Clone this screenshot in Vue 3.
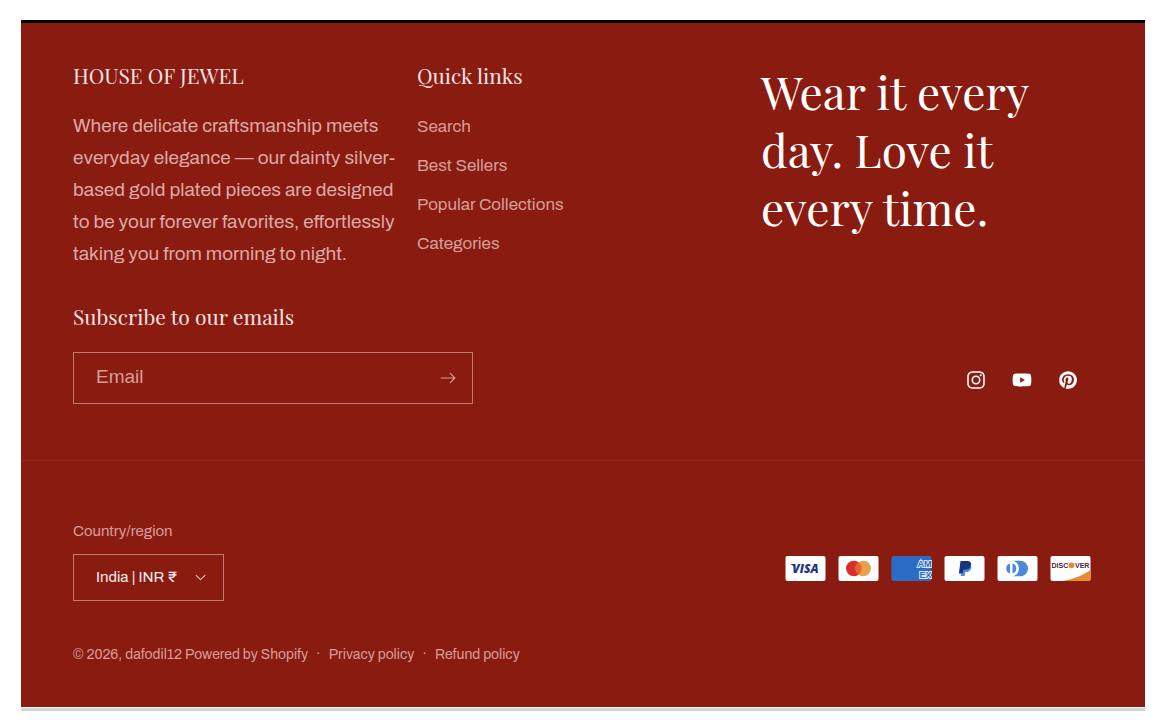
<script setup>
import { ref } from 'vue'

const email = ref('')
const region = ref('in')
const links = ['Search', 'Best Sellers', 'Popular Collections', 'Categories']
const socials = [
  {
    name: 'Instagram',
    path: 'M13.23 3.49c-.84-.03-1.09-.04-3.23-.04-2.14 0-2.39.01-3.24.05-.78.03-1.2.16-1.48.27-.38.15-.64.32-.92.6-.28.28-.45.54-.6.92-.11.28-.24.7-.27 1.47-.04.85-.05 1.1-.05 3.24s.01 2.39.05 3.24c.03.78.16 1.2.27 1.48.15.37.32.64.6.92.28.28.55.45.92.6.28.11.7.24 1.48.27.84.04 1.1.05 3.24.05s2.39-.01 3.23-.05c.78-.03 1.2-.16 1.48-.27.38-.15.64-.32.92-.6.28-.28.45-.55.6-.92.11-.28.24-.7.27-1.48.04-.85.05-1.1.05-3.24s-.01-2.39-.05-3.24c-.03-.77-.16-1.19-.27-1.47a2.5 2.5 0 0 0-.6-.92 2.5 2.5 0 0 0-.92-.6c-.28-.11-.7-.24-1.48-.28ZM6.69 2.05C7.55 2.01 7.82 2 10 2c2.17 0 2.44.01 3.3.05.85.04 1.43.17 1.94.37.53.2.97.48 1.42.92.44.45.72.89.92 1.42.2.5.33 1.09.37 1.94.04.85.05 1.13.05 3.3s-.01 2.45-.05 3.3c-.04.86-.17 1.44-.37 1.95-.2.52-.48.97-.92 1.41-.45.45-.89.72-1.42.92-.51.2-1.09.34-1.94.37-.86.04-1.13.05-3.3.05-2.18 0-2.45-.01-3.31-.05-.85-.03-1.43-.17-1.94-.37a3.9 3.9 0 0 1-1.41-.92 3.9 3.9 0 0 1-.92-1.41c-.2-.51-.34-1.09-.37-1.95C2.01 12.45 2 12.17 2 10s.01-2.45.05-3.3c.03-.85.17-1.43.37-1.94.2-.53.47-.97.92-1.42.44-.44.89-.72 1.41-.92.51-.2 1.09-.33 1.94-.37ZM10 5.89a4.11 4.11 0 1 1 0 8.22 4.11 4.11 0 0 1 0-8.22Zm0 1.44a2.67 2.67 0 1 0 0 5.34 2.67 2.67 0 0 0 0-5.34Zm4.27-2.56a.96.96 0 1 1 0 1.92.96.96 0 0 1 0-1.92Z'
  },
  {
    name: 'YouTube',
    path: 'M18.16 5.87c.34 1.309.34 4.08.34 4.08s0 2.771-.34 4.08a2.125 2.125 0 0 1-1.53 1.53c-1.309.34-6.63.34-6.63.34s-5.321 0-6.63-.34a2.125 2.125 0 0 1-1.53-1.53c-.34-1.309-.34-4.08-.34-4.08s0-2.771.34-4.08a2.173 2.173 0 0 1 1.53-1.53C4.679 4 10 4 10 4s5.321 0 6.63.34a2.173 2.173 0 0 1 1.53 1.53ZM8.3 12.5l4.42-2.55L8.3 7.4v5.1Z'
  },
  {
    name: 'Pinterest',
    path: 'M10 2.01c2.124.01 4.16.855 5.666 2.353a8.087 8.087 0 0 1 1.277 9.68A7.952 7.952 0 0 1 10 18.04a8.164 8.164 0 0 1-2.276-.307c.403-.653.672-1.24.816-1.729l.567-2.2c.134.27.393.5.768.702.384.192.768.297 1.19.297.836 0 1.585-.24 2.248-.72a4.678 4.678 0 0 0 1.537-1.969c.37-.89.554-1.848.537-2.813 0-1.249-.48-2.315-1.43-3.227a5.061 5.061 0 0 0-3.65-1.374c-.893 0-1.729.154-2.478.461a5.023 5.023 0 0 0-3.236 4.552c0 .72.134 1.355.413 1.902.269.538.672.922 1.22 1.152.096.039.182.039.25 0 .066-.028.114-.096.143-.192l.173-.653c.048-.144.02-.288-.105-.432a2.257 2.257 0 0 1-.548-1.565 3.803 3.803 0 0 1 3.976-3.861c1.047 0 1.863.288 2.44.855.585.576.883 1.315.883 2.228 0 .768-.106 1.479-.317 2.122a3.813 3.813 0 0 1-.893 1.556c-.384.384-.836.576-1.345.576-.413 0-.749-.144-1.018-.451-.259-.307-.345-.672-.25-1.085.147-.514.298-1.026.452-1.537l.173-.701c.057-.25.086-.451.086-.624 0-.346-.096-.634-.269-.855-.192-.22-.451-.336-.797-.336-.432 0-.797.192-1.085.595-.288.394-.442.893-.442 1.499.005.374.063.746.173 1.104l.058.144c-.576 2.478-.913 3.938-1.037 4.36-.116.528-.154 1.153-.125 1.863A8.067 8.067 0 0 1 2 10.03c0-2.208.778-4.11 2.343-5.666A7.721 7.721 0 0 1 10 2.001v.01Z'
  }
]
</script>

<template>
  <div class="page">
    <footer class="footer">
      <div class="upper">
        <div class="columns">
          <section>
            <h2 class="heading">HOUSE OF JEWEL</h2>
            <p class="about">Where delicate craftsmanship meets everyday elegance — our dainty silver-based gold plated pieces are designed to be your forever favorites, effortlessly taking you from morning to night.</p>
          </section>
          <nav aria-labelledby="quick-links">
            <h2 id="quick-links" class="heading">Quick links</h2>
            <ul class="links">
              <li v-for="link in links" :key="link"><a href="#">{{ link }}</a></li>
            </ul>
          </nav>
          <p class="slogan">Wear it every day. Love it every time.</p>
        </div>

        <div class="signup-row">
          <form class="signup" @submit.prevent>
            <h2 class="heading">Subscribe to our emails</h2>
            <div class="field">
              <input v-model="email" type="email" placeholder="Email" aria-label="Email" />
              <button type="submit" aria-label="Subscribe">
                <svg width="16" height="12" viewBox="0 0 14 10" aria-hidden="true"><path fill="currentColor" d="M8.537.808a.5.5 0 01.817-.162l4 4a.5.5 0 010 .708l-4 4a.5.5 0 11-.708-.708L11.793 5.5H1a.5.5 0 010-1h10.793L8.646 1.354a.5.5 0 01-.109-.546z" /></svg>
              </button>
            </div>
          </form>
          <div class="socials">
            <a v-for="s in socials" :key="s.name" href="#" :aria-label="s.name">
              <svg width="22" height="22" viewBox="0 0 20 20" aria-hidden="true"><path fill="currentColor" fill-rule="evenodd" :d="s.path" /></svg>
            </a>
          </div>
        </div>
      </div>

      <div class="lower">
        <div class="region-row">
          <div class="region">
            <label for="region">Country/region</label>
            <div class="picker">
              <select id="region" v-model="region">
                <option value="in">India | INR ₹</option>
              </select>
              <svg class="caret" width="11" height="7" viewBox="0 0 10 6" aria-hidden="true"><path fill="currentColor" d="M9.354.646a.5.5 0 00-.708 0L5 4.293 1.354.646a.5.5 0 00-.708.708l4 4a.5.5 0 00.708 0l4-4a.5.5 0 000-.708z" /></svg>
            </div>
          </div>
          <ul class="payments" aria-label="Payment methods">
            <li>
              <svg viewBox="0 0 40 25" role="img" aria-label="Visa">
                <rect width="40" height="25" rx="2" fill="#fff" />
                <path d="M5 8h4l1 3.500z" fill="#27337f" />
                <text x="20" y="17" text-anchor="middle" class="visa">VISA</text>
              </svg>
            </li>
            <li>
              <svg viewBox="0 0 40 25" role="img" aria-label="Mastercard">
                <rect width="40" height="25" rx="2" fill="#fff" />
                <circle cx="15.300" cy="12.500" r="7.800" fill="#db2d2c" />
                <circle cx="24.700" cy="12.500" r="7.800" fill="#e8a04c" />
                <path d="M20 6.270a7.800 7.800 0 0 1 0 12.460a7.800 7.800 0 0 1 0-12.460z" fill="#e5622b" />
              </svg>
            </li>
            <li>
              <svg viewBox="0 0 40 25" role="img" aria-label="American Express">
                <rect width="40" height="25" rx="2" fill="#2d6cc6" />
                <text x="40" y="11" text-anchor="end" class="amex">AM</text>
                <text x="40" y="21.500" text-anchor="end" class="amex">EX</text>
              </svg>
            </li>
            <li>
              <svg viewBox="0 0 40 25" role="img" aria-label="PayPal">
                <rect width="40" height="25" rx="2" fill="#fff" />
                <path d="M18 9h8c1.800 2.800.5 6.500-3.500 7h-1.700l-.6 4h-4z" fill="#4a90d6" />
                <path d="M16 5h6.500c3.200 0 4.700 1.800 4 4.600-.7 2.900-2.800 4.100-5.800 4.100h-1.800l-.9 3.800h-3.600z" fill="#1d3282" />
              </svg>
            </li>
            <li>
              <svg viewBox="0 0 40 25" role="img" aria-label="Diners Club">
                <rect width="40" height="25" rx="2" fill="#fff" />
                <path d="M15 4.700h7.500c4.500 0 8 3.500 8 7.800s-3.500 7.800-8 7.800h-7.500z" fill="#4a8bd4" />
                <circle cx="13.500" cy="12.500" r="8" fill="#fff" />
                <path d="M12.500 7.500a5.200 5.200 0 0 0 0 10zM15 7.500a5.200 5.200 0 0 1 0 10z" fill="#4a8bd4" />
              </svg>
            </li>
            <li>
              <svg viewBox="0 0 40 25" role="img" aria-label="Discover">
                <rect width="40" height="25" rx="2" fill="#fff" />
                <path d="M12 25C23 23 33 19 40 14v9a2 2 0 0 1-2 2z" fill="#e58a35" />
                <circle cx="21" cy="9.300" r="2.900" fill="#e58a35" />
                <text x="1" y="12" class="discover">DISC</text>
                <text x="24.500" y="12" class="discover">VER</text>
              </svg>
            </li>
          </ul>
        </div>

        <div class="legal">
          <small>© 2026, <a href="#">dafodil12</a> <a href="#">Powered by Shopify</a></small>
          <span aria-hidden="true">·</span>
          <a href="#">Privacy policy</a>
          <span aria-hidden="true">·</span>
          <a href="#">Refund policy</a>
        </div>
      </div>
    </footer>
  </div>
</template>

<style>
body {
  margin: 0;
  background: #fff;
}
</style>

<style scoped>
.page {
  padding: 20px 19px 14px 21px;
  font-family: Archivo, "Liberation Sans", sans-serif;
}
.page * {
  box-sizing: border-box;
}
.footer {
  background: #8a1b11;
  border-top: 3px solid #000;
  color: #fff;
  box-shadow: 0 1px 0 #fff, 0 4px 0 #d4d4d4;
}
a {
  color: inherit;
  text-decoration: none;
}
ul {
  margin: 0;
  padding: 0;
  list-style: none;
}
.upper {
  padding: 39px 54px 56px 52px;
  border-bottom: 1px solid #97291f;
}
.columns {
  display: grid;
  grid-template-columns: repeat(3, 1fr);
  gap: 14px;
}
.heading {
  margin: 0;
  font: 400 21px/26px "Playfair Display", "Liberation Serif", serif;
  color: #f6e4e1;
}
.about {
  margin: 22px 0 0;
  font-size: 19px;
  line-height: 32px;
  color: #dba9a3;
}
.links {
  margin-top: 19px;
}
.links li {
  font-size: 17px;
  line-height: 39px;
  color: #d59f99;
}
.slogan {
  margin: 0;
  font: 400 46px/58px "Playfair Display", "Liberation Serif", serif;
}
.signup-row {
  display: flex;
  justify-content: space-between;
  align-items: flex-end;
  margin-top: 33px;
}
.signup {
  flex: 0 1 400px;
}
.field {
  display: flex;
  margin-top: 23px;
  border: 1px solid #bf7b74;
}
.field input {
  flex: 1;
  min-width: 0;
  height: 50px;
  padding: 0 0 2px 22px;
  border: 0;
  background: none;
  color: #fff;
  font: 19px "Liberation Sans", sans-serif;
}
.field input::placeholder {
  color: #d59f99;
  opacity: 1;
}
.field button {
  display: grid;
  place-items: center;
  width: 48px;
  padding: 0;
  border: 0;
  background: none;
  color: #d59f99;
}
.socials {
  display: flex;
}
.socials a {
  display: grid;
  place-items: center;
  width: 46px;
  height: 48px;
}
.lower {
  padding: 60px 54px 42px 52px;
}
.region-row {
  display: flex;
  justify-content: space-between;
  align-items: flex-end;
}
.region label {
  display: block;
  font-size: 15px;
  line-height: 20px;
  color: #d59f99;
}
.picker {
  position: relative;
  width: 151px;
  margin-top: 13px;
}
.picker select {
  display: block;
  width: 100%;
  height: 47px;
  padding: 0 40px 2px 22px;
  appearance: none;
  border: 1px solid #bf7b74;
  border-radius: 0;
  background: none;
  color: #fbeeec;
  font: 15px Archivo, "Liberation Sans", sans-serif;
}
.caret {
  position: absolute;
  top: 20px;
  right: 18px;
  color: #e6c3bf;
  pointer-events: none;
}
.payments {
  display: flex;
  gap: 12px;
  margin-bottom: 20px;
}
.payments svg {
  display: block;
  width: 41px;
  height: 25px;
}
.visa {
  font: italic 800 12px "Open Sans", sans-serif;
  fill: #27337f;
}
.amex {
  font: 700 9px "Liberation Sans", sans-serif;
  fill: #2d6cc6;
  stroke: #dbe8f8;
  stroke-width: 2px;
  paint-order: stroke;
}
.discover {
  font: 700 7px "Liberation Sans", sans-serif;
  fill: #4a2146;
}
.legal {
  display: flex;
  align-items: center;
  gap: 8px;
  margin-top: 44px;
  font-size: 14px;
  line-height: 20px;
  color: #d59f99;
}
.legal small {
  font-size: 14px;
}
</style>
